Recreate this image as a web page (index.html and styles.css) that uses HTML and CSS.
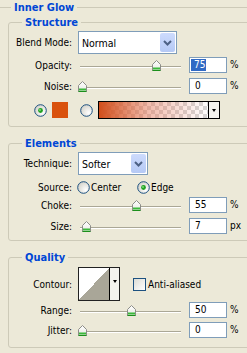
FILE: index.html
```html
<!DOCTYPE html>
<html lang="en">

<head>
	<meta charset="UTF-8">
	<title>Inner Glow</title>
	<link rel="stylesheet" href="styles.css">
</head>

<body>
	<svg class="defs" width="0" height="0">
		<defs>
			<radialGradient id="radio-fill" cx="0.7" cy="0.7" r="0.8">
				<stop offset="0" stop-color="#ffffff" />
				<stop offset="1" stop-color="#d2d1c8" />
			</radialGradient>
			<linearGradient id="thumb-fill" x1="0" y1="0" x2="0" y2="1">
				<stop offset="0" stop-color="#ffffff" />
				<stop offset="1" stop-color="#e8e8e2" />
			</linearGradient>
			<symbol id="thumb" viewBox="0 0 9 11">
				<path d="M4.5 0.5 L8.5 4.5 V10.5 H0.5 V4.5 Z" fill="url(#thumb-fill)" stroke="#8c8d88" />
				<path d="M1 8.5 H8" stroke="#3cb93c" stroke-width="2" />
				<path d="M0.5 10.5 H8.5" stroke="#1b8f1b" />
			</symbol>
			<symbol id="radio-off" viewBox="0 0 13 13">
				<circle cx="6.5" cy="6.5" r="5.8" fill="url(#radio-fill)" stroke="#1c5180" />
			</symbol>
			<symbol id="radio-on" viewBox="0 0 13 13">
				<circle cx="6.5" cy="6.5" r="5.8" fill="url(#radio-fill)" stroke="#1c5180" />
				<circle cx="6.5" cy="6.5" r="2.4" fill="#21a121" />
				<circle cx="6" cy="6" r="0.9" fill="#7fe27f" />
			</symbol>
			<symbol id="chevron" viewBox="0 0 15 19">
				<path d="M4 8 L7.5 11.5 L11 8" fill="none" stroke="#4d6185" stroke-width="2" />
			</symbol>
		</defs>
	</svg>

	<fieldset class="group outer">
		<legend>Inner Glow</legend>

		<fieldset class="group section">
			<legend>Structure</legend>
			<div class="row blend">
				<span class="label">Blend Mode:</span>
				<div class="select wide">
					<span class="value">Normal</span>
					<span class="btn"><svg width="15" height="19"><use href="#chevron" /></svg></span>
				</div>
			</div>
			<div class="row slide first">
				<span class="label">Opacity:</span>
				<div class="slider">
					<div class="track"></div>
					<svg class="thumb" width="9" height="11" style="left: 75px"><use href="#thumb" /></svg>
				</div>
				<div class="num"><span class="sel">75</span></div>
				<span class="unit">%</span>
			</div>
			<div class="row slide">
				<span class="label">Noise:</span>
				<div class="slider">
					<div class="track"></div>
					<svg class="thumb" width="9" height="11" style="left: 1px"><use href="#thumb" /></svg>
				</div>
				<div class="num">0</div>
				<span class="unit">%</span>
			</div>
			<div class="row colors">
				<svg class="radio solid" width="13" height="13"><use href="#radio-on" /></svg>
				<div class="swatch"></div>
				<svg class="radio ramp" width="13" height="13"><use href="#radio-off" /></svg>
				<div class="gradbox">
					<div class="grad"></div>
					<div class="drop"><i class="tri"></i></div>
				</div>
			</div>
		</fieldset>

		<fieldset class="group section">
			<legend>Elements</legend>
			<div class="row blend">
				<span class="label">Technique:</span>
				<div class="select narrow">
					<span class="value">Softer</span>
					<span class="btn"><svg width="15" height="19"><use href="#chevron" /></svg></span>
				</div>
			</div>
			<div class="row source">
				<span class="label">Source:</span>
				<label class="opt center"><svg class="radio" width="13" height="13"><use href="#radio-off" /></svg>Center</label>
				<label class="opt"><svg class="radio" width="13" height="13"><use href="#radio-on" /></svg>Edge</label>
			</div>
			<div class="row slide tight">
				<span class="label">Choke:</span>
				<div class="slider">
					<div class="track"></div>
					<svg class="thumb" width="9" height="11" style="left: 55px"><use href="#thumb" /></svg>
				</div>
				<div class="num">55</div>
				<span class="unit">%</span>
			</div>
			<div class="row slide">
				<span class="label">Size:</span>
				<div class="slider">
					<div class="track"></div>
					<svg class="thumb" width="9" height="11" style="left: 5px"><use href="#thumb" /></svg>
				</div>
				<div class="num">7</div>
				<span class="unit">px</span>
			</div>
		</fieldset>

		<fieldset class="group section quality">
			<legend>Quality</legend>
			<div class="row contour-row">
				<span class="label">Contour:</span>
				<div class="contour">
					<div class="curve"></div>
					<div class="drop"><i class="tri"></i></div>
				</div>
				<label class="check"><span class="box"></span>Anti-aliased</label>
			</div>
			<div class="row slide near">
				<span class="label">Range:</span>
				<div class="slider">
					<div class="track"></div>
					<svg class="thumb" width="9" height="11" style="left: 50px"><use href="#thumb" /></svg>
				</div>
				<div class="num">50</div>
				<span class="unit">%</span>
			</div>
			<div class="row slide close">
				<span class="label">Jitter:</span>
				<div class="slider">
					<div class="track"></div>
					<svg class="thumb" width="9" height="11" style="left: 1px"><use href="#thumb" /></svg>
				</div>
				<div class="num">0</div>
				<span class="unit">%</span>
			</div>
		</fieldset>
	</fieldset>
</body>

</html>
```

FILE: styles.css
```css
html,
body {
	margin: 0;
}

body {
	width: 247px;
	height: 353px;
	overflow: hidden;
	background-color: #ece9d8;
	font-family: Tahoma, "DejaVu Sans Condensed", "Liberation Sans", sans-serif;
	font-size: 10px;
	color: #000;
}

.defs {
	position: absolute;
	width: 0;
	height: 0;
}

/* group boxes */

.group {
	margin: 0;
	min-width: 0;
	border: 1px solid #cdcab8;
	border-radius: 3px;
}

.group > legend {
	height: 15px;
	padding: 0 3px;
	font-size: 11px;
	line-height: 15px;
	font-weight: bold;
	color: #0046d5;
}

.outer {
	width: 320px;
	margin-left: -4px;
	padding: 0 0 20px 11px;
}

.outer > legend {
	margin-left: 3px;
}

.section {
	width: 300px;
	margin-top: 9px;
	padding: 1px 0 6px 0;
}

.section:first-of-type {
	margin-top: 0;
	padding-bottom: 7px;
}

.section > legend {
	margin-left: 13px;
}

.quality {
	padding-top: 2px;
	padding-bottom: 9px;
}

/* rows */

.row {
	display: flex;
	align-items: center;
}

.label {
	flex: none;
	width: 63px;
	text-align: right;
}

.blend {
	height: 23px;
}

.slide {
	height: 16px;
	margin-top: 5px;
}

.slide.first,
.slide.tight {
	margin-top: 3px;
}

.slide.near {
	margin-top: 1px;
}

.slide.close {
	margin-top: 4px;
}

/* combo box */

.select {
	display: flex;
	align-items: center;
	box-sizing: border-box;
	height: 23px;
	margin-left: 6px;
	border: 1px solid #7f9db9;
	background-color: #fff;
}

.select.wide {
	width: 99px;
}

.select.narrow {
	width: 70px;
}

.select .value {
	flex: 1;
	padding-left: 3px;
	font-size: 10.5px;
}

.select .btn {
	display: block;
	width: 15px;
	height: 19px;
	margin-right: 1px;
	border-radius: 2px;
	background: linear-gradient(#cddbfd, #b5c9f5);
}

.select .btn svg {
	display: block;
}

/* slider */

.slider {
	position: relative;
	flex: none;
	width: 110px;
	height: 16px;
	margin-left: 5px;
}

.track {
	margin: 9px 6px 0 3px;
	border-top: 1px solid #aaa796;
	border-bottom: 1px solid #fff;
}

.thumb {
	position: absolute;
	top: 3px;
}

.num {
	flex: none;
	box-sizing: border-box;
	width: 38px;
	height: 16px;
	margin-left: 2px;
	padding-left: 5px;
	border: 1px solid #7f9db9;
	background-color: #fff;
	line-height: 14px;
}

.sel {
	display: inline-block;
	margin-left: -4px;
	padding: 0 1px 0 3px;
	line-height: 12px;
	background-color: #316ac5;
	color: #fff;
}

.unit {
	margin: 0 0 2px 3px;
}

/* colour row */

.colors {
	height: 18px;
	margin-top: 7px;
}

.radio {
	display: block;
	flex: none;
}

.radio.solid {
	margin-left: 25px;
}

.swatch {
	width: 16px;
	height: 16px;
	margin-left: 5px;
	background-color: #d9520e;
}

.radio.ramp {
	margin-left: 12px;
}

.gradbox {
	display: flex;
	box-sizing: border-box;
	width: 122px;
	height: 18px;
	margin-left: 5px;
	border: 1px solid #000;
}

.grad {
	flex: 1;
	background:
		linear-gradient(to right, #d24f1c, rgba(228, 120, 90, 0.5) 45%, rgba(255, 255, 255, 0)),
		repeating-conic-gradient(#d6d6d6 0 25%, #ffffff 0 50%) 0 0 / 8px 8px;
}

.drop {
	display: flex;
	justify-content: center;
	width: 10px;
	border-left: 1px solid #000;
	background-color: #f4f3ee;
}

.gradbox .drop {
	align-items: center;
}

.tri {
	width: 0;
	height: 0;
	border-left: 2.5px solid transparent;
	border-right: 2.5px solid transparent;
	border-top: 3px solid #000;
}

/* elements */

.source {
	height: 13px;
	margin-top: 6px;
}

.opt {
	display: flex;
	align-items: center;
	gap: 1px;
}

.opt.center {
	width: 60px;
	margin-left: 5px;
}

/* quality */

.contour-row {
	height: 34px;
}

.contour {
	display: flex;
	box-sizing: border-box;
	width: 42px;
	height: 34px;
	margin-left: 6px;
	border: 1px solid #222;
}

.curve {
	flex: 1;
	background: linear-gradient(to bottom right, #fff 50%, #a9a698 50%);
}

.contour .drop {
	padding-top: 12px;
	box-sizing: border-box;
}

.check {
	display: flex;
	align-items: center;
	gap: 2px;
	margin-left: 13px;
}

.box {
	box-sizing: border-box;
	width: 13px;
	height: 13px;
	border: 1px solid #1c5180;
	background: linear-gradient(135deg, #dcdcd5, #fff);
}
```
